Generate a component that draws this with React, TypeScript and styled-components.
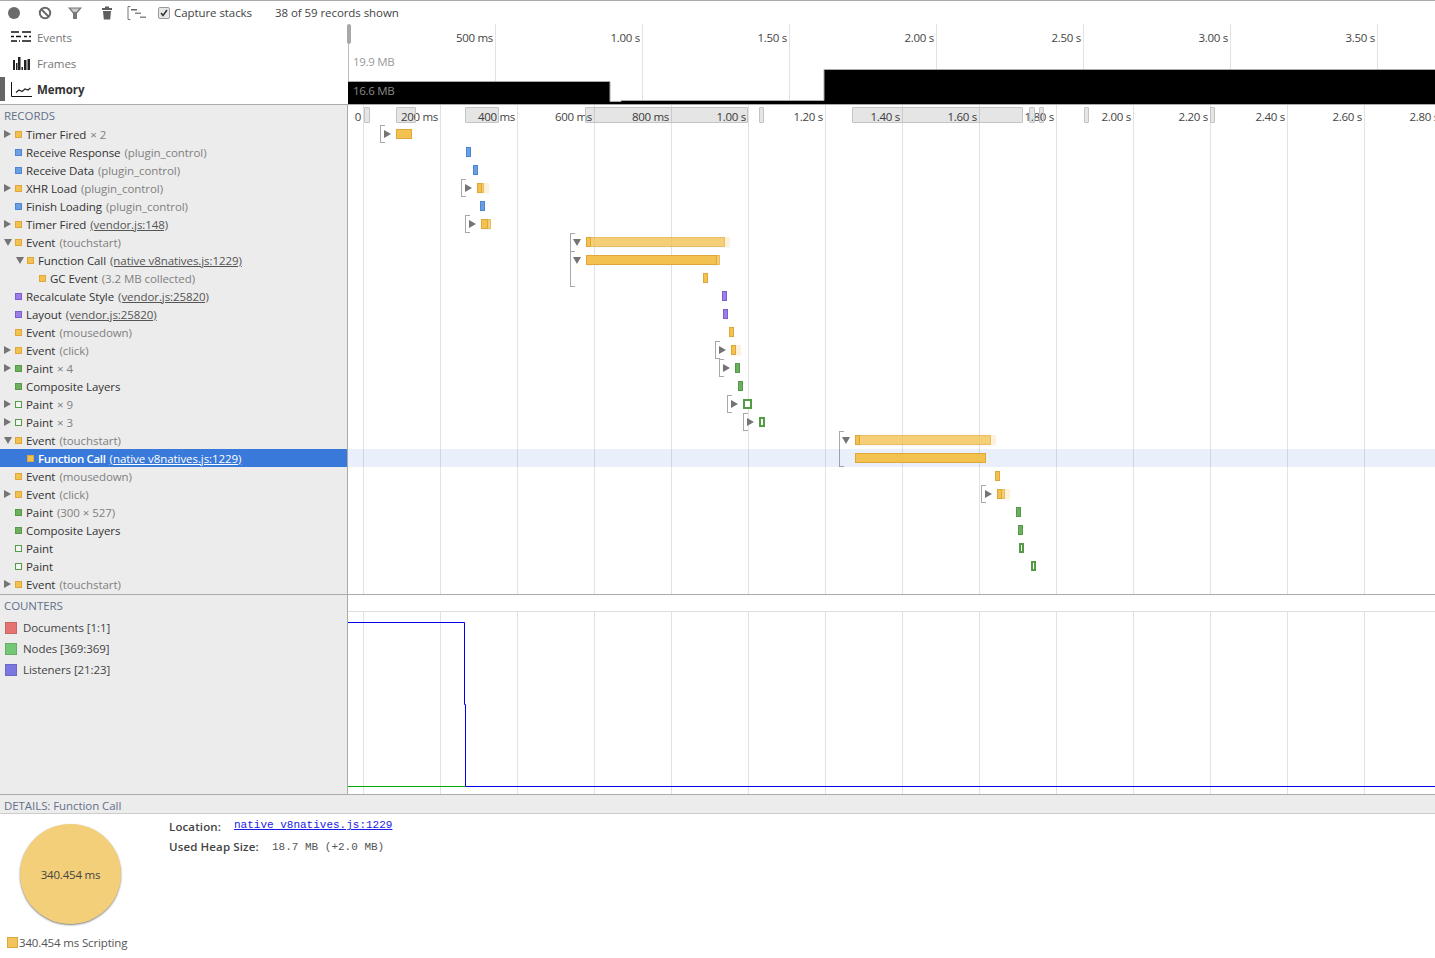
import React from "react";
import styled, { createGlobalStyle } from "styled-components";

const GlobalStyle = createGlobalStyle`
    html, body {
        margin: 0;
        padding: 0;
        background: #fff;
        overflow: hidden;
    }
`;

const SANS = `"Open Sans", "Noto Sans", sans-serif`;
const MONO = `"Liberation Mono", monospace`;
const BODY_SIZE = "11.5px";
const TIMELINE_LEFT = 348;

type Tone = "yellow" | "blue" | "purple" | "green";

const FILL: Record<Tone, string> = {
    yellow: "#f3c14f",
    blue: "#6d9ee2",
    purple: "#9c7ee6",
    green: "#6fae60",
};
const EDGE: Record<Tone, string> = {
    yellow: "#dfa736",
    blue: "#4c86d8",
    purple: "#7d5cd6",
    green: "#529c45",
};

const Page = styled.div`
    width: 1435px;
    height: 958px;
    display: flex;
    flex-direction: column;
    overflow: hidden;
    font-family: ${SANS};
    font-size: ${BODY_SIZE};
    letter-spacing: -0.07px;
    color: #333;
    background: #fff;
`;

const Toolbar = styled.div`
    height: 23px;
    flex: none;
    display: flex;
    align-items: center;
    border-top: 1px solid #aaa;
    color: #444;
`;

const ToolIcon = styled.svg<{ $gap: number }>`
    flex: none;
    display: block;
    margin-left: ${(p) => p.$gap}px;
`;

const CaptureBox = styled.span`
    width: 10px;
    height: 10px;
    margin-left: 11px;
    flex: none;
    border: 1px solid #9a9a9a;
    border-radius: 2px;
    background: #e8e8e8;
    display: flex;
    align-items: center;
    justify-content: center;
`;

const CaptureLabel = styled.span`
    margin-left: 4px;
    width: 101px;
    flex: none;
`;

const Overview = styled.div`
    height: 80px;
    flex: none;
    display: flex;
    border-bottom: 1px solid #aaa;
`;

const OverviewSide = styled.div`
    width: 348px;
    flex: none;
    display: flex;
    flex-direction: column;
`;

const OverviewRow = styled.div<{ $active?: boolean }>`
    position: relative;
    height: 26px;
    display: flex;
    align-items: center;
    gap: 6px;
    padding-left: 11px;
    color: ${(p) => (p.$active ? "#333" : "#777")};
    font-weight: ${(p) => (p.$active ? 700 : 400)};

    ${(p) =>
        p.$active
            ? `&::before {
                content: "";
                position: absolute;
                left: 0;
                top: 1px;
                bottom: 1px;
                width: 5px;
                background: #666;
            }`
            : ""}
`;

const OverviewChart = styled.div`
    position: relative;
    flex: 1;
`;

const GridLine = styled.div`
    position: absolute;
    top: 0;
    bottom: 0;
    width: 1px;
    background: #e2e2e2;
`;

const TimeLabel = styled.span`
    position: absolute;
    top: 50%;
    transform: translate(-100%, -50%);
    white-space: nowrap;
    letter-spacing: -0.3px;
    color: #444;
`;

const OverviewTimes = styled.div`
    position: absolute;
    top: 0;
    left: 0;
    right: 0;
    height: 26px;
`;

const MemoryShape = styled.svg`
    position: absolute;
    left: 0;
    top: 0;
`;

const Handle = styled.div`
    position: absolute;
    left: -1px;
    top: 0;
    width: 4px;
    height: 20px;
    border-radius: 2px;
    background: #a8a8a8;
`;

const HandleLine = styled.div`
    position: absolute;
    left: 0;
    top: 20px;
    height: 37px;
    width: 1px;
    background: #bbb;
`;

const MemoryLabel = styled.span<{ $onDark?: boolean }>`
    position: absolute;
    left: 5px;
    top: ${(p) => (p.$onDark ? "59px" : "30px")};
    line-height: 16px;
    letter-spacing: -0.3px;
    color: ${(p) => (p.$onDark ? "#8a8a8a" : "#999")};
`;

const Split = styled.div<{ $height: number }>`
    height: ${(p) => p.$height}px;
    flex: none;
    display: flex;
    border-bottom: 1px solid #aaa;
    box-sizing: content-box;
`;

const Sidebar = styled.div`
    width: 347px;
    flex: none;
    background: #ececec;
    border-right: 1px solid #aaa;
    overflow: hidden;
`;

const SectionTitle = styled.div`
    height: 20px;
    line-height: 22px;
    padding-left: 4px;
    color: #62708a;
`;

const RecordRow = styled.div<{ $selected?: boolean }>`
    height: 18px;
    display: flex;
    align-items: center;
    white-space: nowrap;
    background: ${(p) => (p.$selected ? "#3879d9" : "transparent")};
    color: ${(p) => (p.$selected ? "#fff" : "#333")};
`;

const RecordName = styled.span<{ $selected?: boolean }>`
    font-weight: ${(p) => (p.$selected ? 600 : 400)};
    letter-spacing: ${(p) => (p.$selected ? "-0.33px" : "inherit")};
`;

const Indent = styled.span<{ $level: number }>`
    width: ${(p) => 4 + p.$level * 12}px;
    flex: none;
`;

const ArrowSlot = styled.span`
    width: 11px;
    flex: none;
    display: flex;
    align-items: center;
`;

const Arrow = styled.span<{ $down?: boolean }>`
    display: block;
    width: 0;
    height: 0;
    border-style: solid;
    border-color: transparent;
    ${(p) =>
        p.$down
            ? "border-width: 7px 4px 0 4px; border-top-color: #747474;"
            : "border-width: 4px 0 4px 7px; border-left-color: #747474;"}
`;

const Square = styled.span<{ $tone: Tone; $hollow?: boolean }>`
    width: 5px;
    height: 5px;
    flex: none;
    margin-right: 4px;
    border: 1px solid ${(p) => EDGE[p.$tone]};
    background: ${(p) => (p.$hollow ? "#f5f5f5" : FILL[p.$tone])};
`;

const Detail = styled.span<{ $selected?: boolean; $link?: boolean }>`
    margin-left: 4px;
    color: ${(p) => (p.$selected ? "#fff" : p.$link ? "#555" : "#808080")};
    text-decoration: ${(p) => (p.$link ? "underline" : "none")};
`;

const Timeline = styled.div`
    position: relative;
    flex: 1;
    overflow: hidden;
`;

const RulerRow = styled.div`
    position: relative;
    height: 20px;

    ${TimeLabel} {
        top: 11px;
    }
`;

const RulerTick = styled.div`
    position: absolute;
    top: 2px;
    height: 14px;
    box-sizing: content-box;
    background: rgba(0, 0, 0, 0.1);
    border: 1px solid #c4c4c4;
    border-radius: 1px;
`;

const TrackRow = styled.div<{ $selected?: boolean }>`
    position: relative;
    height: 18px;
    background: ${(p) => (p.$selected ? "rgba(56, 121, 217, 0.11)" : "transparent")};
`;

const Bracket = styled.span<{ $rows: number }>`
    position: absolute;
    top: 0;
    width: 4px;
    height: ${(p) => p.$rows * 18 - 2}px;
    border: 1px solid #a8a8a8;
    border-right: 0;
`;

const TrackArrow = styled.span<{ $down?: boolean }>`
    position: absolute;
    top: ${(p) => (p.$down ? "6px" : "5px")};
`;

const Bar = styled.div<{ $tone: Tone; $layer: "self" | "mid" | "faint" }>`
    position: absolute;
    top: 4px;
    height: 10px;
    box-sizing: border-box;
    border: 1px solid ${(p) => EDGE[p.$tone]};
    background: ${(p) => FILL[p.$tone]};
    ${(p) =>
        p.$layer === "faint"
            ? "opacity: 0.2; border-color: transparent; box-shadow: 0 1px 1px rgba(0,0,0,0.1);"
            : ""}
    ${(p) => (p.$layer === "mid" ? "opacity: 0.7;" : "")}
`;

const HollowBar = styled.div`
    position: absolute;
    top: 4px;
    height: 10px;
    box-sizing: border-box;
    border: 2px solid #529c45;
    background: #fff;
`;

const CounterStrip = styled.div`
    height: 16px;
    border-bottom: 1px solid #ddd;
    box-sizing: content-box;
    background: #fff;
    position: relative;
    z-index: 1;
`;

const CounterChart = styled.svg`
    position: absolute;
    left: 0;
    top: 17px;
`;

const CounterRow = styled.div`
    height: 21px;
    display: flex;
    align-items: center;
    gap: 6px;
    padding-left: 5px;
    color: #444;
`;

const CounterSwatch = styled.span<{ $color: string }>`
    width: 10px;
    height: 10px;
    border: 1px solid rgba(0, 0, 0, 0.12);
    background: ${(p) => p.$color};
`;

const CounterList = styled.div`
    padding-top: 2px;
`;

const DetailsHeader = styled.div`
    height: 18px;
    flex: none;
    line-height: 21px;
    padding-left: 4px;
    color: #62708a;
    background: #ececec;
    border-bottom: 1px solid #ccc;
`;

const DetailsBody = styled.div`
    flex: 1;
    display: flex;
`;

const PieColumn = styled.div`
    width: 169px;
    flex: none;
    padding: 10px 0 0 7px;
    box-sizing: border-box;
`;

const Pie = styled.div`
    width: 101px;
    height: 100px;
    margin-left: 13px;
    border-radius: 50%;
    background: #f3cf79;
    box-shadow: 0 1px 2px rgba(0, 0, 0, 0.5);
    display: flex;
    align-items: center;
    justify-content: center;
    letter-spacing: -0.2px;
    color: #444;
`;

const Legend = styled.div`
    margin-top: 11px;
    display: flex;
    align-items: center;
    white-space: nowrap;
    letter-spacing: -0.15px;
    color: #555;
`;

const LegendSwatch = styled.span`
    width: 9px;
    height: 9px;
    margin-right: 1px;
    border: 1px solid #d9a93d;
    background: #f3c35c;
`;

const InfoGrid = styled.div`
    padding-top: 2px;
    display: flex;
    flex-direction: column;
`;

const InfoRow = styled.div`
    height: 20px;
    display: flex;
    align-items: center;
`;

const InfoLabel = styled.span<{ $width: number }>`
    width: ${(p) => p.$width}px;
    flex: none;
    font-weight: 600;
    letter-spacing: 0.13px;
    color: #444;
`;

const SourceLink = styled.a`
    font-family: ${MONO};
    font-size: 11px;
    letter-spacing: 0;
    color: #1a1ae6;
    text-decoration: underline;
    margin-top: -2px;
`;

const InfoValue = styled.span`
    font-family: ${MONO};
    font-size: 11px;
    letter-spacing: 0;
    color: #555;
    margin-top: 2px;
`;

type RecordItem = {
    name: string;
    detail?: string;
    link?: boolean;
    level?: number;
    arrow?: "right" | "down";
    tone: Tone;
    hollow?: boolean;
};

type Track = {
    start: number;
    end: number;
    tone: Tone;
    selfEnd?: number;
    midEnd?: number;
    hollow?: boolean;
    bracket?: number;
    bracketRows?: number;
    arrow?: "right" | "down";
};

const RECORDS: RecordItem[] = [
    { name: "Timer Fired", detail: "× 2", arrow: "right", tone: "yellow" },
    { name: "Receive Response", detail: "(plugin_control)", tone: "blue" },
    { name: "Receive Data", detail: "(plugin_control)", tone: "blue" },
    { name: "XHR Load", detail: "(plugin_control)", arrow: "right", tone: "yellow" },
    { name: "Finish Loading", detail: "(plugin_control)", tone: "blue" },
    { name: "Timer Fired", detail: "(vendor.js:148)", link: true, arrow: "right", tone: "yellow" },
    { name: "Event", detail: "(touchstart)", arrow: "down", tone: "yellow" },
    { name: "Function Call", detail: "(native v8natives.js:1229)", link: true, level: 1, arrow: "down", tone: "yellow" },
    { name: "GC Event", detail: "(3.2 MB collected)", level: 2, tone: "yellow" },
    { name: "Recalculate Style", detail: "(vendor.js:25820)", link: true, tone: "purple" },
    { name: "Layout", detail: "(vendor.js:25820)", link: true, tone: "purple" },
    { name: "Event", detail: "(mousedown)", tone: "yellow" },
    { name: "Event", detail: "(click)", arrow: "right", tone: "yellow" },
    { name: "Paint", detail: "× 4", arrow: "right", tone: "green" },
    { name: "Composite Layers", tone: "green" },
    { name: "Paint", detail: "× 9", arrow: "right", tone: "green", hollow: true },
    { name: "Paint", detail: "× 3", arrow: "right", tone: "green", hollow: true },
    { name: "Event", detail: "(touchstart)", arrow: "down", tone: "yellow" },
    { name: "Function Call", detail: "(native v8natives.js:1229)", link: true, level: 1, tone: "yellow" },
    { name: "Event", detail: "(mousedown)", tone: "yellow" },
    { name: "Event", detail: "(click)", arrow: "right", tone: "yellow" },
    { name: "Paint", detail: "(300 × 527)", tone: "green" },
    { name: "Composite Layers", tone: "green" },
    { name: "Paint", tone: "green", hollow: true },
    { name: "Paint", tone: "green", hollow: true },
    { name: "Event", detail: "(touchstart)", arrow: "right", tone: "yellow" },
];

const SELECTED_ROW = 18;

const TRACKS: (Track | null)[] = [
    { start: 396, end: 412, tone: "yellow", bracket: 380, arrow: "right" },
    { start: 466, end: 471, tone: "blue" },
    { start: 473, end: 478, tone: "blue" },
    { start: 477, end: 489, selfEnd: 482, midEnd: 484, tone: "yellow", bracket: 461, arrow: "right" },
    { start: 480, end: 485, tone: "blue" },
    { start: 481, end: 491, selfEnd: 488, midEnd: 491, tone: "yellow", bracket: 465, arrow: "right" },
    { start: 586, end: 730, selfEnd: 591, midEnd: 725, tone: "yellow", bracket: 570, bracketRows: 3, arrow: "down" },
    { start: 586, end: 720, selfEnd: 717, midEnd: 720, tone: "yellow", bracket: 570, bracketRows: 2, arrow: "down" },
    { start: 703, end: 708, tone: "yellow" },
    { start: 722, end: 727, tone: "purple" },
    { start: 723, end: 728, tone: "purple" },
    { start: 729, end: 734, tone: "yellow" },
    { start: 731, end: 741, selfEnd: 736, midEnd: 736, tone: "yellow", bracket: 715, arrow: "right" },
    { start: 735, end: 740, tone: "green", bracket: 719, arrow: "right" },
    { start: 738, end: 743, tone: "green" },
    { start: 743, end: 752, tone: "green", hollow: true, bracket: 727, arrow: "right" },
    { start: 759, end: 765, tone: "green", hollow: true, bracket: 743, arrow: "right" },
    { start: 855, end: 996, selfEnd: 860, midEnd: 991, tone: "yellow", bracket: 839, bracketRows: 2, arrow: "down" },
    { start: 855, end: 986, tone: "yellow" },
    { start: 995, end: 1000, tone: "yellow" },
    { start: 997, end: 1010, selfEnd: 1002, midEnd: 1005, tone: "yellow", bracket: 981, arrow: "right" },
    { start: 1016, end: 1021, tone: "green" },
    { start: 1018, end: 1023, tone: "green" },
    { start: 1019, end: 1024, tone: "green", hollow: true },
    { start: 1031, end: 1036, tone: "green", hollow: true },
    null,
];

const RULER_LABELS = [
    "0", "200 ms", "400 ms", "600 ms", "800 ms", "1.00 s", "1.20 s", "1.40 s",
    "1.60 s", "1.80 s", "2.00 s", "2.20 s", "2.40 s", "2.60 s", "2.80 s",
];

const RULER_TICKS: [number, number][] = [
    [364, 370], [396, 416], [465, 499], [585, 748], [759, 764],
    [852, 1023], [1029, 1035], [1039, 1044], [1084, 1089], [1210, 1215],
];

const OVERVIEW_LABELS = ["500 ms", "1.00 s", "1.50 s", "2.00 s", "2.50 s", "3.00 s", "3.50 s"];

const toTrack = (x: number) => x - TIMELINE_LEFT;
const rulerX = (i: number) => 15 + i * 77;
const overviewX = (i: number) => 147 * (i + 1);

function ToolbarIcons() {
    return (
        <>
            <ToolIcon $gap={7} width="14" height="14" viewBox="0 0 14 14">
                <circle cx="7" cy="7" r="6" fill="#6b6b6b" />
            </ToolIcon>
            <ToolIcon $gap={17} width="14" height="14" viewBox="0 0 14 14">
                <circle cx="7" cy="7" r="5.2" fill="none" stroke="#6b6b6b" strokeWidth="2" />
                <path d="M3.5 3.5l7 7" stroke="#6b6b6b" strokeWidth="2" />
            </ToolIcon>
            <ToolIcon $gap={15} width="16" height="14" viewBox="0 0 16 14">
                <path d="M1 1.5h14L10 7.5V13H6V7.5z" fill="#777" />
                <path d="M3.5 2.5h9L9.5 6h-3z" fill="#c9c9c9" />
            </ToolIcon>
            <ToolIcon $gap={18} width="12" height="14" viewBox="0 0 12 14">
                <rect x="1" y="2" width="10" height="2" fill="#5f5f5f" />
                <rect x="4" y="0.5" width="4" height="2" fill="#5f5f5f" />
                <path d="M2 5h8l-0.8 8.5H2.8z" fill="#5f5f5f" />
            </ToolIcon>
            <ToolIcon $gap={14} width="20" height="14" viewBox="0 0 20 14">
                <path d="M3.5 0.5H1v13h2.5" fill="none" stroke="#777" />
                <rect x="4" y="3" width="6" height="1.5" fill="#666" />
                <rect x="8" y="6.5" width="6" height="1.5" fill="#888" />
                <rect x="13" y="10.5" width="6" height="1.5" fill="#888" />
            </ToolIcon>
        </>
    );
}

function EventsIcon() {
    return (
        <svg width="20" height="12" viewBox="0 0 20 12">
            <path d="M0 1h8M11 1h9M0 5.5h3M5 5.5h5M13 5.5h3M18 5.5h2M0 10h6M8 10h1M11 10h9" stroke="#111" strokeWidth="1.6" />
        </svg>
    );
}

function FramesIcon() {
    return (
        <svg width="20" height="13" viewBox="0 0 20 13">
            <path d="M2 3h2v10H2zM5 6h1.5v7H5zM7 0h2.5v13H7zM10.5 10h1.5v3h-1.5zM13 3h2.5v10H13zM16.5 2h2.5v11h-2.5z" fill="#222" />
        </svg>
    );
}

function MemoryIcon() {
    return (
        <svg width="20" height="15" viewBox="0 0 20 15" style={{ overflow: "visible" }}>
            <path d="M0.5 0v14.5H21" fill="none" stroke="#111" />
            <path d="M5 10.5l3-2.5 3 1.5 3-2.5 3 1 2.5-2" fill="none" stroke="#222" strokeWidth="1.2" />
        </svg>
    );
}

function MemoryChart() {
    return (
        <MemoryShape width="1087" height="80" viewBox="0 0 1087 80">
            <path d="M-1 57.5H262V77.5H273V76.5H476V45.5H1088V81H-1z" fill="#000" stroke="#aaa" strokeWidth="1" />
        </MemoryShape>
    );
}

function TrackBars({ track }: { track: Track }) {
    const left = toTrack(track.start);
    if (track.hollow) {
        return <HollowBar style={{ left, width: track.end - track.start }} />;
    }
    if (track.selfEnd === undefined) {
        return <Bar $tone={track.tone} $layer="self" style={{ left, width: track.end - track.start }} />;
    }
    return (
        <>
            <Bar $tone={track.tone} $layer="faint" style={{ left, width: track.end - track.start }} />
            <Bar $tone={track.tone} $layer="mid" style={{ left, width: (track.midEnd ?? track.end) - track.start }} />
            <Bar $tone={track.tone} $layer="self" style={{ left, width: track.selfEnd - track.start }} />
        </>
    );
}

export default function App() {
    return (
        <Page>
            <GlobalStyle />
            <Toolbar>
                <ToolbarIcons />
                <CaptureBox>
                    <svg width="8" height="8" viewBox="0 0 8 8">
                        <path d="M1 4l2 2.5L7 1" fill="none" stroke="#333" strokeWidth="1.5" />
                    </svg>
                </CaptureBox>
                <CaptureLabel>Capture stacks</CaptureLabel>
                <span>38 of 59 records shown</span>
            </Toolbar>

            <Overview>
                <OverviewSide>
                    <OverviewRow>
                        <EventsIcon />
                        <span>Events</span>
                    </OverviewRow>
                    <OverviewRow>
                        <FramesIcon />
                        <span>Frames</span>
                    </OverviewRow>
                    <OverviewRow $active>
                        <MemoryIcon />
                        <span>Memory</span>
                    </OverviewRow>
                </OverviewSide>
                <OverviewChart>
                    {OVERVIEW_LABELS.map((_, i) => (
                        <GridLine key={i} style={{ left: overviewX(i) }} />
                    ))}
                    <MemoryChart />
                    <OverviewTimes>
                        {OVERVIEW_LABELS.map((label, i) => (
                            <TimeLabel key={label} style={{ left: overviewX(i) - 2 }}>
                                {label}
                            </TimeLabel>
                        ))}
                    </OverviewTimes>
                    <HandleLine />
                    <Handle />
                    <MemoryLabel>19.9 MB</MemoryLabel>
                    <MemoryLabel $onDark>16.6 MB</MemoryLabel>
                </OverviewChart>
            </Overview>

            <Split $height={489}>
                <Sidebar>
                    <SectionTitle>RECORDS</SectionTitle>
                    {RECORDS.map((rec, i) => {
                        const selected = i === SELECTED_ROW;
                        return (
                            <RecordRow key={i} $selected={selected}>
                                <Indent $level={rec.level ?? 0} />
                                <ArrowSlot>{rec.arrow && <Arrow $down={rec.arrow === "down"} />}</ArrowSlot>
                                <Square $tone={rec.tone} $hollow={rec.hollow} />
                                <RecordName $selected={selected}>{rec.name}</RecordName>
                                {rec.detail && (
                                    <Detail $selected={selected} $link={rec.link}>
                                        {rec.detail}
                                    </Detail>
                                )}
                            </RecordRow>
                        );
                    })}
                </Sidebar>
                <Timeline>
                    {RULER_LABELS.map((_, i) => (
                        <GridLine key={i} style={{ left: rulerX(i) }} />
                    ))}
                    <RulerRow>
                        {RULER_LABELS.map((label, i) => (
                            <TimeLabel key={label} style={{ left: rulerX(i) - 2 }}>
                                {label}
                            </TimeLabel>
                        ))}
                        {RULER_TICKS.map(([from, to]) => (
                            <RulerTick key={from} style={{ left: toTrack(from), width: to - from - 2 }} />
                        ))}
                    </RulerRow>
                    {TRACKS.map((track, i) => (
                        <TrackRow key={i} $selected={i === SELECTED_ROW}>
                            {track?.bracket !== undefined && (
                                <>
                                    <Bracket $rows={track.bracketRows ?? 1} style={{ left: toTrack(track.bracket) }} />
                                    <TrackArrow
                                        $down={track.arrow === "down"}
                                        style={{ left: toTrack(track.bracket) + (track.arrow === "down" ? 3 : 4) }}
                                    >
                                        <Arrow $down={track.arrow === "down"} />
                                    </TrackArrow>
                                </>
                            )}
                            {track && <TrackBars track={track} />}
                        </TrackRow>
                    ))}
                </Timeline>
            </Split>

            <Split $height={199}>
                <Sidebar>
                    <SectionTitle>COUNTERS</SectionTitle>
                    <CounterList>
                        <CounterRow>
                            <CounterSwatch $color="#e57373" />
                            <span>Documents [1:1]</span>
                        </CounterRow>
                        <CounterRow>
                            <CounterSwatch $color="#74c776" />
                            <span>Nodes [369:369]</span>
                        </CounterRow>
                        <CounterRow>
                            <CounterSwatch $color="#7a78e0" />
                            <span>Listeners [21:23]</span>
                        </CounterRow>
                    </CounterList>
                </Sidebar>
                <Timeline>
                    {RULER_LABELS.map((_, i) => (
                        <GridLine key={i} style={{ left: rulerX(i) }} />
                    ))}
                    <CounterStrip />
                    <CounterChart width="1087" height="182" viewBox="0 0 1087 182">
                        <path d="M0 174.5H117.5" fill="none" stroke="#00aa00" />
                        <path d="M0 10.5H116.5V92.5H117.5V174.5H1087" fill="none" stroke="#0000ee" />
                    </CounterChart>
                </Timeline>
            </Split>

            <DetailsHeader>DETAILS: Function Call</DetailsHeader>
            <DetailsBody>
                <PieColumn>
                    <Pie>340.454 ms</Pie>
                    <Legend>
                        <LegendSwatch />
                        340.454 ms Scripting
                    </Legend>
                </PieColumn>
                <InfoGrid>
                    <InfoRow>
                        <InfoLabel $width={65}>Location:</InfoLabel>
                        <SourceLink href="#">native v8natives.js:1229</SourceLink>
                    </InfoRow>
                    <InfoRow>
                        <InfoLabel $width={103}>Used Heap Size:</InfoLabel>
                        <InfoValue>18.7 MB (+2.0 MB)</InfoValue>
                    </InfoRow>
                </InfoGrid>
            </DetailsBody>
        </Page>
    );
}
